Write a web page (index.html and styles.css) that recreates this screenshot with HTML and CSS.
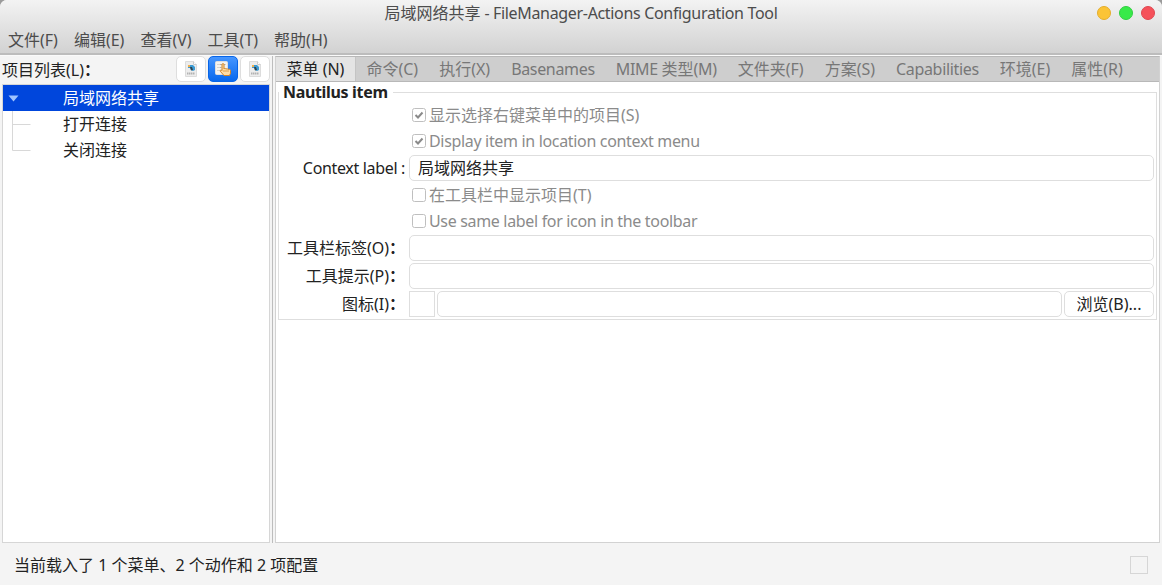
FILE: index.html
```html
<!DOCTYPE html>
<html lang="zh-CN">
<head>
<meta charset="utf-8">
<title>FileManager-Actions Configuration Tool</title>
<link rel="stylesheet" href="styles.css">
</head>
<body>
<div class="window">
  <header class="header">
    <div class="titlebar">
      <h1 class="title">局域网络共享<span class="latin"> - FileManager-Actions Configuration Tool</span></h1>
      <div class="controls"><i class="dot minimize"></i><i class="dot maximize"></i><i class="dot close"></i></div>
    </div>
    <nav class="menubar"><span>文件(F)</span><span>编辑(E)</span><span>查看(V)</span><span>工具(T)</span><span>帮助(H)</span></nav>
  </header>
  <main class="main">
    <aside class="sidebar">
      <div class="list-head">
        <span class="list-title">项目列表(L)<b>：</b></span>
        <button class="tool"><svg width="12" height="16" viewBox="0 0 12 16"><path d="M.5.5h8l3 3v12H.5z" fill="#ededed" stroke="#dcdcdc"/><path d="M8.500.5v3h3" fill="#fff" stroke="#ccc"/><path d="M3 6l2-2h3l2 2v3l-2 1-2-1-1-2H3z" fill="#3b9bd4"/><path d="M3 4h2v2H3z" fill="#f0b04c"/><path d="M5 6h2l1 3-2 .5z" fill="#30424c"/><path d="M2 12.500h8" stroke="#b2b2b2" stroke-width="2" stroke-dasharray="1.500 .5"/></svg></button>
        <button class="tool active"><svg width="17" height="16" viewBox="0 0 17 16"><rect x=".5" y=".5" width="12" height="13" rx="1" fill="#f5f3ef" stroke="#dedede"/><path d="M2.500 3.500h1m1 0h6M2.500 6.500h1m1 0h2M2.500 9.500h1m1 0h1" stroke="#b5b0aa"/><path d="M7 3.700c0-1.500 2-1.500 2 0V8c.4-.8 1.800-.7 2 .2.500-.8 1.800-.6 2 .3.800-.7 2.500-.3 2.500 1.100v2.700l-1 2.200H9L5.300 10.300c-.5-1.200.9-1.700 1.700-.6z" fill="#ffdda5" stroke="#cf8427"/><path d="M9 9v2m2-2v2m2-2v2" stroke="#cf8427" stroke-width=".7"/></svg></button>
        <button class="tool"><svg width="12" height="16" viewBox="0 0 12 16"><path d="M.5.5h8l3 3v12H.5z" fill="#ededed" stroke="#dcdcdc"/><path d="M8.500.5v3h3" fill="#fff" stroke="#ccc"/><path d="M3 6l2-2h3l2 2v3l-2 1-2-1-1-2H3z" fill="#3b9bd4"/><path d="M3 4h2v2H3z" fill="#f0b04c"/><path d="M5 6h2l1 3-2 .5z" fill="#30424c"/><path d="M2 12.500h8" stroke="#b2b2b2" stroke-width="2" stroke-dasharray="1.500 .5"/></svg></button>
      </div>
      <div class="tree">
        <div class="node selected"><svg class="branch" width="60" height="26"><path d="M5.500 10.500h10l-5 6z" fill="#9fc4ff"/></svg>局域网络共享</div>
        <div class="node"><svg class="branch" width="60" height="26"><path d="M9.500 0v26M9.500 13.500h18" fill="none" stroke="#d8d8d8"/></svg>打开连接</div>
        <div class="node"><svg class="branch" width="60" height="26"><path d="M9.500 0v13.500h18" fill="none" stroke="#d8d8d8"/></svg>关闭连接</div>
      </div>
    </aside>
    <div class="divider"></div>
    <section class="notebook">
      <nav class="tabs"><span class="tab current">菜单 (N)</span><span class="tab">命令(C)</span><span class="tab">执行(X)</span><span class="tab latin">Basenames</span><span class="tab"><span class="latin">MIME </span>类型<span class="latin">(M)</span></span><span class="tab">文件夹(F)</span><span class="tab">方案(S)</span><span class="tab latin">Capabilities</span><span class="tab">环境(E)</span><span class="tab">属性(R)</span></nav>
      <fieldset class="frame">
        <legend class="latin">Nautilus item</legend>
        <div class="form">
          <label class="check"><svg class="box" width="14" height="14"><rect x=".5" y=".5" width="13" height="13" rx="2"/><path d="M3.500 7l2.500 2.500 4.500-5"/></svg>显示选择右键菜单中的项目(S)</label>
          <label class="check latin"><svg class="box" width="14" height="14"><rect x=".5" y=".5" width="13" height="13" rx="2"/><path d="M3.500 7l2.500 2.500 4.500-5"/></svg>Display item in location context menu</label>
          <span class="label latin">Context label :</span><div class="field">局域网络共享</div>
          <label class="check"><svg class="box" width="14" height="14"><rect x=".5" y=".5" width="13" height="13" rx="2"/></svg>在工具栏中显示项目(T)</label>
          <label class="check latin"><svg class="box" width="14" height="14"><rect x=".5" y=".5" width="13" height="13" rx="2"/></svg>Use same label for icon in the toolbar</label>
          <span class="label">工具栏标签(O)<b>：</b></span><div class="field"></div>
          <span class="label">工具提示(P)<b>：</b></span><div class="field"></div>
          <span class="label">图标(I)<b>：</b></span>
          <div class="icon-row"><div class="preview"></div><div class="field"></div><button class="browse">浏览(B)...</button></div>
        </div>
      </fieldset>
    </section>
  </main>
  <footer class="status"><span>当前载入了 1 个菜单、2 个动作和 2 项配置</span><i class="status-box"></i></footer>
</div>
</body>
</html>
```
FILE: styles.css
```css
* { box-sizing: border-box; }
body { margin: 0; background: #9b9b9b; }
.window {
  width: 1162px; height: 585px; display: flex; flex-direction: column;
  background: #f4f4f4; color: #222; border-radius: 7px 7px 0 0; overflow: hidden;
  font: 16px/24px "Noto Sans", "Noto Sans CJK SC", sans-serif;
  letter-spacing: 0; white-space: nowrap;
}
button { font: inherit; letter-spacing: inherit; color: inherit; padding: 0; }
.latin { letter-spacing: -.33px; }
.header {
  height: 55px; flex: none; color: #4c4c4c;
  background: linear-gradient(#f3f3f3, #d2d2d2); border-bottom: 2px solid #bcbcbc;
}
.titlebar { height: 26px; display: grid; grid-template-columns: 1fr auto 1fr; align-items: center; }
.title { grid-column: 2; margin: 0; font-size: 16px; line-height: 24px; font-weight: 400; }
.controls { display: flex; justify-content: flex-end; gap: 8px; padding-right: 7px; }
.dot { width: 14px; height: 14px; border-radius: 50%; border: 1px solid; }
.minimize { background: #fbc436; border-color: #e4ad2c; }
.maximize { background: #38ea49; border-color: #30cf40; }
.close { background: #f5515a; border-color: #df4650; }
.menubar { display: flex; gap: 16px; padding-left: 8px; height: 28px; align-items: center; }
.main { height: 488px; flex: none; display: flex; border-top: 1px solid #fafafa; }
.sidebar { width: 270px; padding-left: 2px; display: flex; flex-direction: column; }
.list-head { height: 28px; display: flex; align-items: flex-start; gap: 2px; }
.list-title { flex: 1; padding-top: 2px; }
.tool {
  width: 30px; height: 26px; display: flex; align-items: center; justify-content: center;
  background: #fff; border: 1px solid #dedede; border-radius: 5px;
}
.tool.active { background: linear-gradient(#4696ff, #0868ed); border-color: #0765e8; }
.tree { flex: 1; background: #fff; border: 1px solid #d6d6d6; }
.node { height: 26px; display: flex; align-items: center; }
.selected { background: #0046dc; color: #fff; }
.divider { width: 6px; border-left: 2px solid #f4f4f4; border-right: 3px solid #f4f4f4; background: #bdbdbd; }
.notebook { width: 885px; margin-left: -1px; border: 1px solid #d2d2d2; border-top-color: #b8b8b8; background: #fff; }
.tabs { height: 25px; display: flex; background: #cecece; border-bottom: 1px solid #b8b8b8; color: #777; }
.tab { padding: 0 10.500px; }
.current { background: #e4e4e4; color: #222; border-right: 1px solid #c4c4c4; }
.frame { margin: -2px 2px 0; border: 1px solid #dedede; padding: 0; height: 240px; min-width: 0; }
.frame legend { padding: 0 5px 0 4px; font-weight: 700; height: 24px; }
.form {
  display: grid; grid-template-columns: 126px 1fr; column-gap: 4px; align-items: center;
  grid-template-rows: 26px 26px 28px 26px 26px 28px 28px 28px; padding-right: 2px; margin-top: -2px;
}
.label { text-align: right; }
.check { grid-column: 2; display: flex; align-items: center; gap: 3px; padding-left: 3px; color: #8b8b8b; }
.box rect { fill: #fff; stroke: #bfbfbf; }
.box path { fill: none; stroke: #8a8a8a; stroke-width: 2; }
.field { height: 26px; flex: 1; background: #fff; border: 1px solid #dedede; border-radius: 5px; padding: 0 8px; }
.icon-row { display: flex; gap: 2px; }
.preview { width: 26px; height: 26px; border: 1px solid #dedede; }
.browse { width: 90px; height: 26px; background: #fff; border: 1px solid #dedede; border-radius: 5px; }
.status { flex: 1; display: flex; align-items: center; justify-content: space-between; padding: 3px 14px 1px; }
.status-box { width: 18px; height: 18px; border: 1px solid #d6d6d6; }
```
